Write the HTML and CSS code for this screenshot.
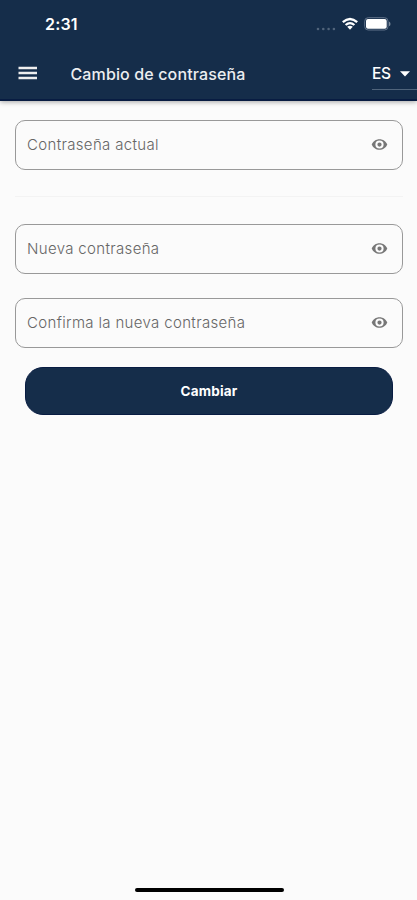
FILE: index.html
```html
<!DOCTYPE html>
<html lang="es">
<head>
<meta charset="utf-8">
<title>Cambio de contraseña</title>
<link rel="stylesheet" href="styles.css">
</head>
<body>
<svg class="defs" width="0" height="0">
  <symbol id="eye" viewBox="0 0 24 24"><path d="M12 4.500C7 4.500 2.730 7.610 1 12c1.730 4.390 6 7.500 11 7.500s9.270-3.110 11-7.500c-1.730-4.390-6-7.500-11-7.500zM12 17.800a5.800 5.800 0 1 1 0-11.600 5.800 5.800 0 0 1 0 11.600zM12 9a3 3 0 1 0 0 6 3 3 0 0 0 0-6z"/></symbol>
</svg>
<div class="screen">
  <header class="header">
    <div class="status">
      <span class="time">2:31</span>
      <div class="indicators">
        <svg class="signal" width="20" height="4" viewBox="0 0 20 4"><circle cx="2" cy="2" r="1.3"/><circle cx="7.300" cy="2" r="1.300"/><circle cx="12.600" cy="2" r="1.300"/><circle cx="17.900" cy="2" r="1.300"/></svg>
        <svg class="wifi" width="18" height="14" viewBox="0 0 18 14"><path d="M1.800 5.200Q9-1.200 16.200 5.200M4.600 8Q9 4.200 13.400 8"/><path class="dot" d="M6.200 9.800Q9 7.800 11.800 9.800L9 12.800Z"/></svg>
        <svg class="battery" width="27" height="14" viewBox="0 0 27 14"><rect class="shell" x=".7" y=".7" width="23.300" height="12.300" rx="3.500"/><rect class="charge" x="2" y="2" width="20.700" height="9.700" rx="2"/><path class="tip" d="M25 4.500q1.500.8 1.500 2.400T25 9.300z"/></svg>
      </div>
    </div>
    <div class="toolbar">
      <svg class="menu" width="20" height="14" viewBox="0 0 20 14"><path d="M.5 2h18.500M.5 7h18.500M.5 12h18.500"/></svg>
      <h1 class="title">Cambio de contraseña</h1>
      <div class="language"><span>ES</span><svg width="10" height="6" viewBox="0 0 10 6"><path d="M0 .3h10L5 5.500z"/></svg></div>
    </div>
  </header>
  <main class="form">
    <div class="field"><span class="label">Contraseña actual</span><svg class="eye"><use href="#eye"/></svg></div>
    <hr class="divider">
    <div class="field"><span class="label">Nueva contraseña</span><svg class="eye"><use href="#eye"/></svg></div>
    <div class="field"><span class="label">Confirma la nueva contraseña</span><svg class="eye"><use href="#eye"/></svg></div>
    <button class="submit">Cambiar</button>
  </main>
  <div class="home"></div>
</div>
</body>
</html>
```
FILE: styles.css
```css
* { box-sizing: border-box; }
body { margin: 0; background: #fbfbfb; font-family: Inter, "Liberation Sans", sans-serif; }
.defs { display: block; }
.screen { height: 900px; display: flex; flex-direction: column; overflow: hidden; }
.header { height: 101px; flex: none; background: #152d4a; color: #fff; border-bottom: 2px solid #081c42; box-shadow: 0 1px 5px rgba(0,0,0,.35); }
.status { height: 48px; display: flex; align-items: center; justify-content: space-between; padding: 0 26.5px 0 45px; }
.time { font-size: 16px; font-weight: 600; letter-spacing: .2px; }
.indicators { display: flex; align-items: center; }
.signal { fill: #51647b; margin: 9px 5px 0 0; }
.wifi { fill: none; stroke: #fff; stroke-width: 2.300; margin-right: 5px; }
.wifi .dot { fill: #fff; stroke: none; }
.shell { fill: none; stroke: #61738a; }
.charge { fill: #fff; }
.tip { fill: #7d8c9e; }
.toolbar { height: 50px; display: flex; align-items: center; padding-left: 18px; }
.menu { stroke: #eee; stroke-width: 2.300; }
.title { margin: 1px 0 0 32.5px; font-size: 16px; font-weight: 500; letter-spacing: .13px; color: #eceef0; white-space: nowrap; }
.language { width: 45px; height: 33px; margin: 1px 0 0 auto; padding-top: 1px; display: flex; align-items: center; font-size: 15.5px; font-weight: 500; letter-spacing: -.4px; border-bottom: 1px solid #50647b; }
.language svg { fill: #fff; margin-left: 9.5px; }
.form { display: flex; flex-direction: column; padding: 19px 14px 0 15px; }
.field { height: 50px; margin-bottom: 24px; padding: 0 14.5px 2px 11px; display: flex; align-items: center; justify-content: space-between; border: 1px solid #999; border-radius: 10px; }
.label { font-size: 15px; font-weight: 300; letter-spacing: .34px; color: #666; white-space: nowrap; }
.eye { width: 17px; height: 17px; fill: #777; }
.divider { width: 100%; height: 1px; margin: 2px 0 27px; border: 0; background: #f3f3f3; }
.submit { height: 48px; margin: -5px 10px 0; border: 1px solid #081c42; border-radius: 18px; background: #152d4a; color: #fff; font: 700 13.5px Inter, sans-serif; letter-spacing: .2px; padding: 0 0 1px; }
.home { width: 149px; height: 4px; margin: auto auto 8px 134.5px; border-radius: 2px; background: #000; }
```
